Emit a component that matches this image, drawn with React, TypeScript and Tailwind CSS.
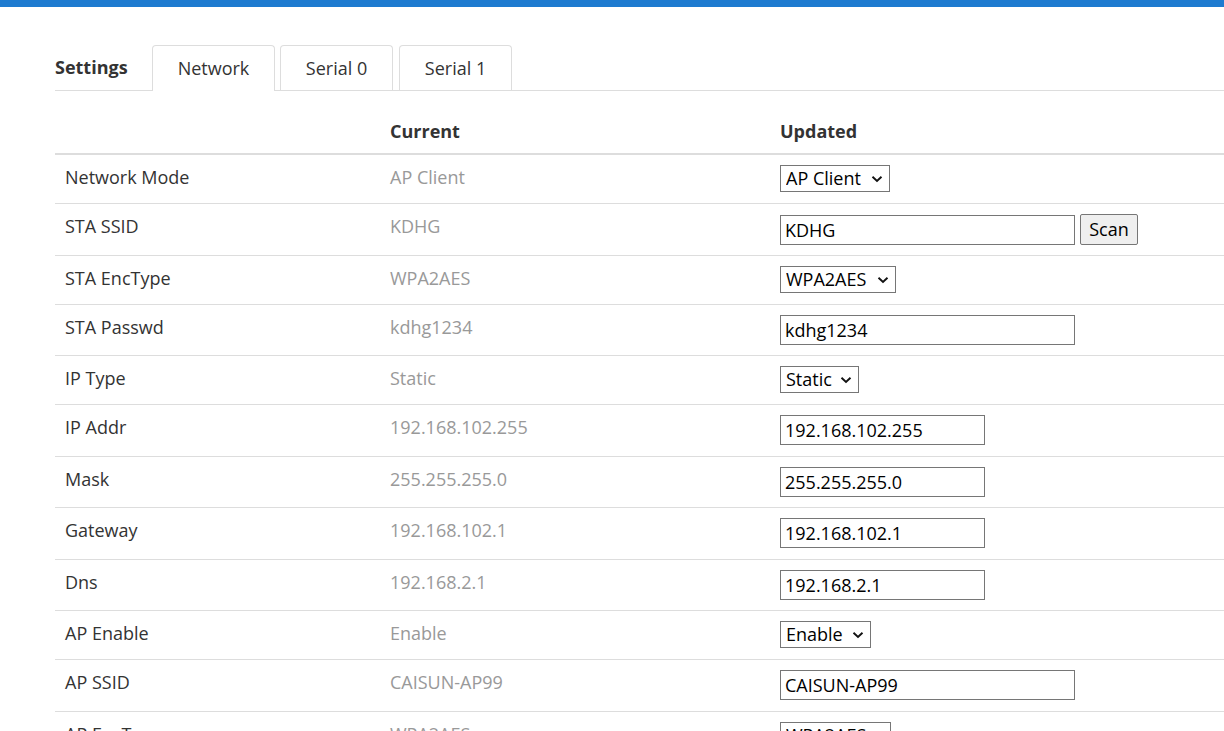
import React from "react";

type Row = {
  label: string;
  current: string;
  kind: "select" | "input" | "inputScan";
  width: number;
  h: number;
};

const rows: Row[] = [
  { label: "Network Mode", current: "AP Client", kind: "select", width: 110, h: 49 },
  { label: "STA SSID", current: "KDHG", kind: "inputScan", width: 295, h: 52 },
  { label: "STA EncType", current: "WPA2AES", kind: "select", width: 116, h: 49 },
  { label: "STA Passwd", current: "kdhg1234", kind: "input", width: 295, h: 51 },
  { label: "IP Type", current: "Static", kind: "select", width: 79, h: 49 },
  { label: "IP Addr", current: "192.168.102.255", kind: "input", width: 205, h: 52 },
  { label: "Mask", current: "255.255.255.0", kind: "input", width: 205, h: 51 },
  { label: "Gateway", current: "192.168.102.1", kind: "input", width: 205, h: 52 },
  { label: "Dns", current: "192.168.2.1", kind: "input", width: 205, h: 51 },
  { label: "AP Enable", current: "Enable", kind: "select", width: 91, h: 49 },
  { label: "AP SSID", current: "CAISUN-AP99", kind: "input", width: 295, h: 52 },
  { label: "AP EncType", current: "WPA2AES", kind: "select", width: 111, h: 49 },
  { label: "AP Passwd", current: "12345678", kind: "input", width: 295, h: 51 },
];

function Chevron() {
  return (
    <svg
      width="12"
      height="8"
      viewBox="0 0 12 8"
      className="pointer-events-none absolute right-[7px] top-1/2 -translate-y-1/2"
    >
      <path d="M1.5 1.8 L6 6 L10.5 1.8" fill="none" stroke="#111" strokeWidth="1.9" />
    </svg>
  );
}

function SelectBox({ value, width }: { value: string; width: number }) {
  return (
    <div className="relative inline-block" style={{ width }}>
      <select
        defaultValue={value}
        className="block h-[27px] w-full appearance-none border border-[#767676] bg-white pl-[5px] pr-[24px] text-[18px] leading-[25px] text-black outline-none"
        style={{ fontFamily: '"Open Sans", "Noto Sans", sans-serif' }}
      >
        <option>{value}</option>
      </select>
      <Chevron />
    </div>
  );
}

function InputBox({ value, width }: { value: string; width: number }) {
  return (
    <input
      defaultValue={value}
      className="block h-[30px] border border-[#767676] bg-white px-[4px] text-[18px] text-black outline-none"
      style={{ width, fontFamily: '"Open Sans", "Noto Sans", sans-serif' }}
    />
  );
}

export default function App() {
  return (
    <div
      className="min-h-screen bg-white text-[#333]"
      style={{ fontFamily: '"Open Sans", "Noto Sans", sans-serif' }}
    >
      <div className="h-[7px] bg-[#1e7bd0]" />
      <div className="pl-[55px] pt-[38px]">
        {/* Tabs */}
        <div className="flex h-[46px] items-end border-b border-[#ddd]">
          <div className="flex h-[45px] w-[97px] items-center text-[18px] font-bold text-[#333]">
            Settings
          </div>
          <div className="-mb-px flex h-[46px] w-[123px] items-center justify-center rounded-t-[4px] border border-b-0 border-[#ddd] bg-white text-[18px] text-[#333]">
            Network
          </div>
          <div className="ml-[5px] flex h-[45px] w-[113px] items-center justify-center rounded-t-[4px] border border-b-0 border-[#ddd] text-[18px] text-[#333]">
            Serial 0
          </div>
          <div className="ml-[6px] flex h-[45px] w-[113px] items-center justify-center rounded-t-[4px] border border-b-0 border-[#ddd] text-[18px] text-[#333]">
            Serial 1
          </div>
        </div>

        {/* Table */}
        <div className="grid h-[64px] grid-cols-[325px_390px_1fr] items-end border-b-2 border-[#ddd] pb-[9px] text-[18px] font-bold text-[#333]">
          <div className="px-[10px]" />
          <div className="px-[10px] leading-[26px]">Current</div>
          <div className="px-[10px] leading-[26px]">Updated</div>
        </div>

        {rows.map((r) => (
          <div
            key={r.label}
            className="grid grid-cols-[325px_390px_1fr] items-start border-b border-[#ddd] text-[18px]"
            style={{ height: r.h }}
          >
            <div className="px-[10px] pt-[9px] leading-[26px] text-[#333]">{r.label}</div>
            <div className="px-[10px] pt-[9px] leading-[26px] text-[#999]">{r.current}</div>
            <div className="px-[10px] pt-[10px]">
              {r.kind === "select" && <SelectBox value={r.current} width={r.width} />}
              {r.kind === "input" && <InputBox value={r.current} width={r.width} />}
              {r.kind === "inputScan" && (
                <div className="flex items-center gap-[5px]">
                  <InputBox value={r.current} width={r.width} />
                  <button className="h-[31px] w-[58px] rounded-[2px] border border-[#767676] bg-[#efefef] text-[18px] text-black">
                    Scan
                  </button>
                </div>
              )}
            </div>
          </div>
        ))}
      </div>
    </div>
  );
}
